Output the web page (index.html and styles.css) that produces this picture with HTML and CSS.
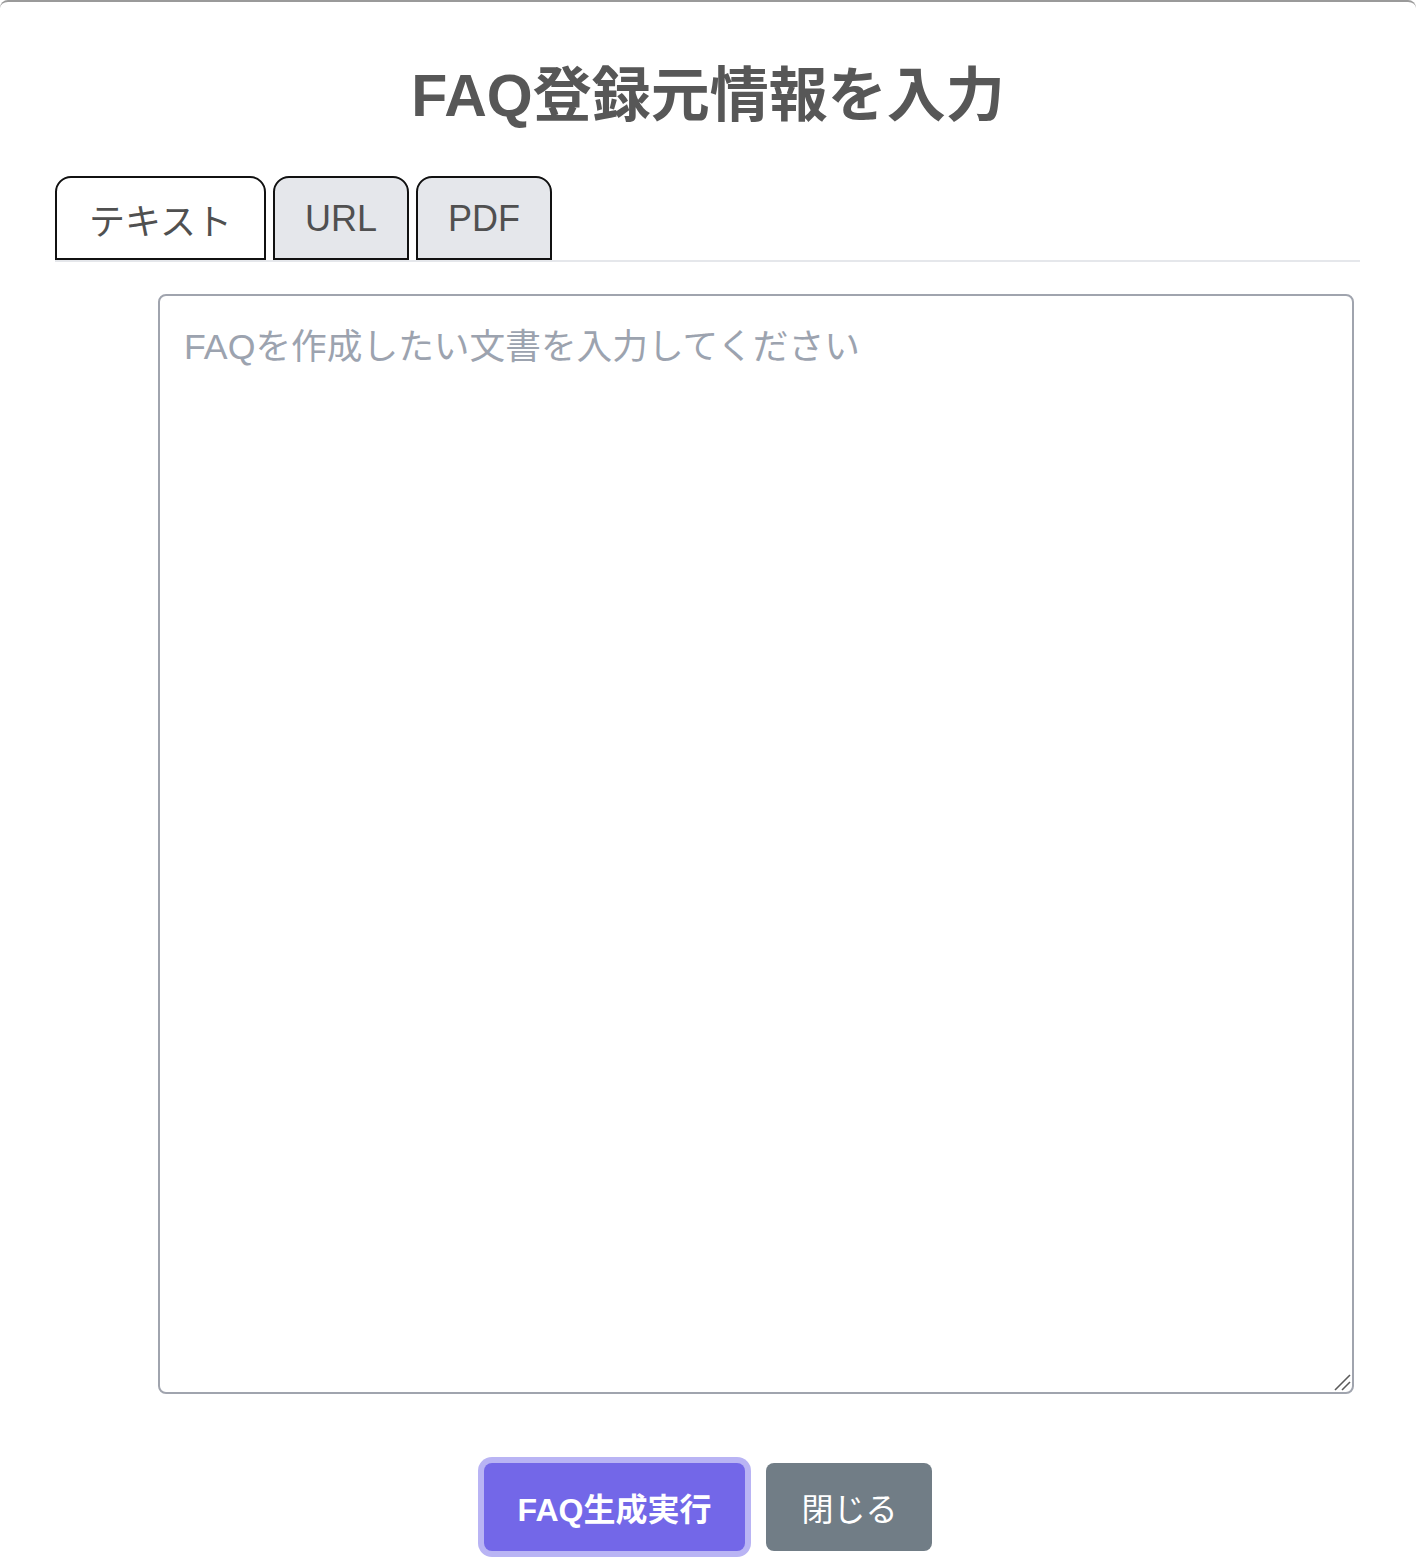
FILE: index.html
```html
<!DOCTYPE html>
<html lang="ja">
<head>
<meta charset="utf-8">
<title>FAQ登録元情報を入力</title>
<link rel="stylesheet" href="styles.css">
</head>
<body>
<div class="modal">
  <h1 class="title">FAQ登録元情報を入力</h1>
  <div class="tabs">
    <button class="tab tab-active">テキスト</button>
    <button class="tab">URL</button>
    <button class="tab">PDF</button>
  </div>
  <div class="panel">
    <div class="field">
      <textarea class="source" placeholder="FAQを作成したい文書を入力してください"></textarea>
      <svg class="grip" width="20" height="20" viewBox="0 0 20 20" aria-hidden="true">
        <line x1="3" y1="18" x2="18" y2="3" stroke="#5a5a5a" stroke-width="1.6"/>
        <line x1="10" y1="18" x2="18" y2="10" stroke="#5a5a5a" stroke-width="1.6"/>
      </svg>
    </div>
  </div>
  <div class="actions">
    <button class="btn btn-primary">FAQ生成実行</button>
    <button class="btn btn-secondary">閉じる</button>
  </div>
</div>
</body>
</html>
```

FILE: styles.css
```css
html, body {
  margin: 0;
  padding: 0;
  background: #ffffff;
}

body {
  font-family: "Liberation Sans", "Noto Sans CJK JP", sans-serif;
  color: #555555;
}

.modal {
  border-top: 2px solid #9a9a9a;
  border-radius: 8px 8px 0 0;
  height: 1566px;
  box-sizing: border-box;
  overflow: hidden;
}

.title {
  margin: 58px 0 0;
  font-size: 59px;
  line-height: 72px;
  font-weight: 700;
  text-align: center;
  color: #575757;
}

.tabs {
  display: flex;
  gap: 7px;
  margin: 44px 56px 0 55px;
  border-bottom: 2px solid #e5e7eb;
}

.tab {
  height: 84px;
  box-sizing: border-box;
  padding: 1px 30px 0;
  border: 2px solid #111111;
  border-radius: 16px 16px 0 0;
  background: #e5e7eb;
  font-family: "Liberation Sans", "Noto Sans CJK JP", sans-serif;
  font-size: 36px;
  color: #505050;
  cursor: pointer;
}

.tab-active {
  background: #ffffff;
  padding: 1px 32px 0;
}

.panel {
  padding: 32px 62px 0 158px;
}

.field {
  position: relative;
}

.source {
  display: block;
  width: 100%;
  height: 1100px;
  box-sizing: border-box;
  padding: 26px 24px;
  border: 2px solid #a0a4ae;
  border-radius: 8px;
  font-family: "Liberation Sans", "Noto Sans CJK JP", sans-serif;
  font-size: 35.7px;
  line-height: 50px;
  color: #333333;
  outline: none;
  resize: none;
}

.source::placeholder {
  color: #9ca3af;
}

.grip {
  position: absolute;
  right: 2px;
  bottom: 2px;
}

.actions {
  display: flex;
  justify-content: center;
  gap: 21px;
  margin-top: 69px;
}

.btn {
  height: 88px;
  box-sizing: border-box;
  border: none;
  border-radius: 8px;
  font-family: "Liberation Sans", "Noto Sans CJK JP", sans-serif;
  font-size: 32px;
  color: #ffffff;
  cursor: pointer;
}

.btn-primary {
  padding: 0 34px;
  font-weight: 700;
  background: #7367e8;
  box-shadow: 0 0 0 6px #b9b4f4;
}

.btn-secondary {
  padding: 0 35px;
  background: #717d86;
}
```
